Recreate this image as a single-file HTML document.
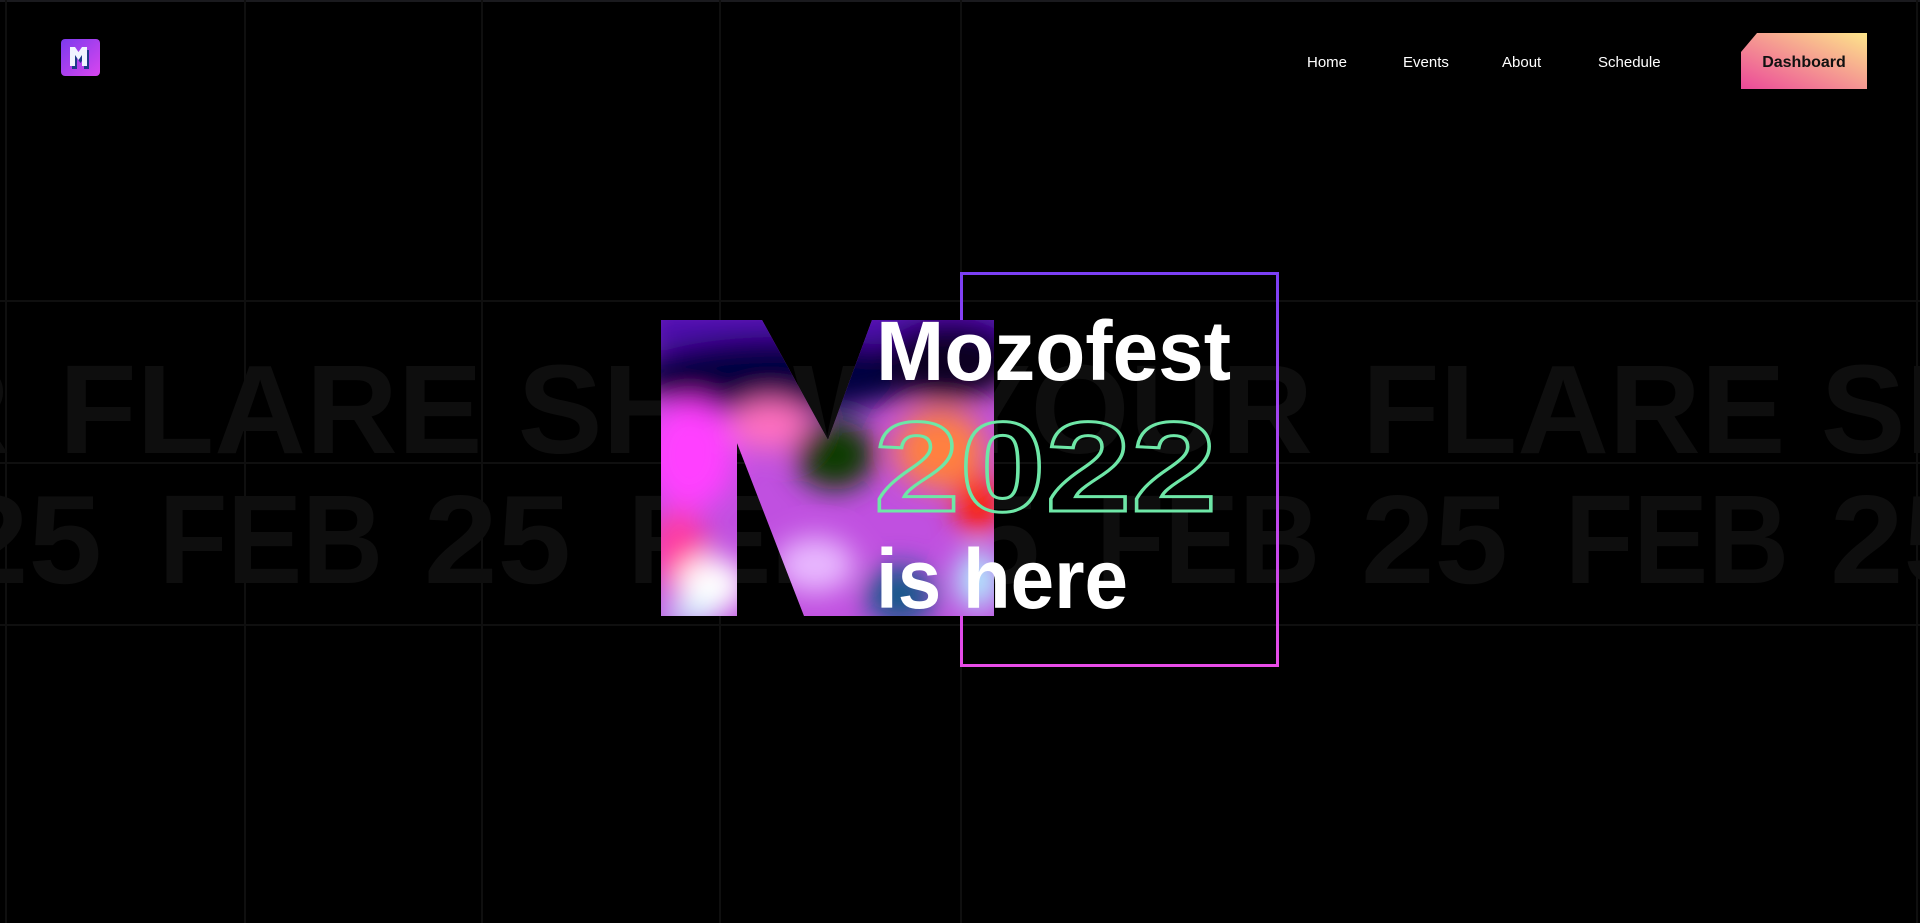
<!DOCTYPE html>
<html><head><meta charset="utf-8"><style>
html,body{margin:0;padding:0;background:#000;width:1920px;height:923px;overflow:hidden}
svg{display:block}
</style></head><body>
<svg width="1920" height="923" viewBox="0 0 1920 923" xmlns="http://www.w3.org/2000/svg">
<defs>
<linearGradient id="lg" x1="0" y1="0" x2="1" y2="1"><stop offset="0" stop-color="#7c3aed"/><stop offset="1" stop-color="#d946ef"/></linearGradient>
<linearGradient id="bg" x1="0" y1="1" x2="1" y2="0"><stop offset="0" stop-color="#ec4899"/><stop offset="1" stop-color="#fde68a"/></linearGradient>
<linearGradient id="box" x1="0" y1="0" x2="0" y2="1"><stop offset="0" stop-color="#7b3ff5"/><stop offset="1" stop-color="#e84ce8"/></linearGradient>
<clipPath id="mc"><polygon points="661,320 762,320 828,440 872,320 994,320 994,616 804,616 737,443 737,616 661,616"/></clipPath>
<filter id="bl" x="-50%" y="-50%" width="200%" height="200%"><feGaussianBlur stdDeviation="14"/></filter>
</defs>
<rect width="1920" height="923" fill="#000"/>
<g fill="#0f0f0f">
<rect x="0" y="0" width="1920" height="2" fill="#1a1a1e"/>
<rect x="5" y="0" width="2" height="923"/><rect x="244" y="0" width="2" height="923"/><rect x="481" y="0" width="2" height="923"/><rect x="719" y="0" width="2" height="923"/><rect x="960" y="0" width="2" height="923"/><rect x="1916" y="0" width="2" height="923"/>
<rect x="0" y="300" width="1920" height="2"/><rect x="0" y="462" width="1920" height="2"/><rect x="0" y="624" width="1920" height="2"/>
</g>
<g font-family="Liberation Sans, sans-serif" font-weight="bold" font-size="126" fill="#0e0e0e">
<text x="-1244" y="453" textLength="1254" lengthAdjust="spacingAndGlyphs">FLARE SHOW YOUR</text>
<text x="59" y="453" textLength="1254" lengthAdjust="spacingAndGlyphs">FLARE SHOW YOUR</text>
<text x="1362" y="453" textLength="1254" lengthAdjust="spacingAndGlyphs">FLARE SHOW YOUR</text>
<text x="-310" y="583" textLength="224" lengthAdjust="spacingAndGlyphs">FEB</text>
<text x="159" y="583" textLength="224" lengthAdjust="spacingAndGlyphs">FEB</text>
<text x="628" y="583" textLength="224" lengthAdjust="spacingAndGlyphs">FEB</text>
<text x="1096" y="583" textLength="224" lengthAdjust="spacingAndGlyphs">FEB</text>
<text x="1565" y="583" textLength="224" lengthAdjust="spacingAndGlyphs">FEB</text>
<text x="-45" y="583" textLength="147" lengthAdjust="spacingAndGlyphs">25</text>
<text x="424" y="583" textLength="147" lengthAdjust="spacingAndGlyphs">25</text>
<text x="893" y="583" textLength="147" lengthAdjust="spacingAndGlyphs">25</text>
<text x="1361" y="583" textLength="147" lengthAdjust="spacingAndGlyphs">25</text>
<text x="1830" y="583" textLength="147" lengthAdjust="spacingAndGlyphs">25</text>
</g>
<rect x="961.5" y="273.5" width="316" height="392" fill="none" stroke="url(#box)" stroke-width="3"/>
<g clip-path="url(#mc)">
<rect x="640" y="300" width="380" height="340" fill="#c050e0"/>
<g filter="url(#bl)">
<rect x="640" y="300" width="380" height="50" fill="#5010b0"/>
<ellipse cx="780" cy="375" rx="150" ry="38" fill="#000040"/>
<ellipse cx="950" cy="360" rx="70" ry="40" fill="#100020"/>
<ellipse cx="690" cy="455" rx="45" ry="55" fill="#ff40ff"/>
<ellipse cx="770" cy="425" rx="40" ry="25" fill="#ff70c0"/>
<ellipse cx="835" cy="455" rx="40" ry="35" fill="#0c3a00"/>
<ellipse cx="940" cy="450" rx="45" ry="40" fill="#ff8040"/>
<ellipse cx="978" cy="505" rx="22" ry="30" fill="#ff2000"/>
<ellipse cx="678" cy="550" rx="30" ry="40" fill="#ff3aa0"/>
<ellipse cx="712" cy="585" rx="35" ry="28" fill="#ffffff"/>
<ellipse cx="815" cy="565" rx="40" ry="28" fill="#e8b8ff"/>
<ellipse cx="900" cy="595" rx="35" ry="30" fill="#15588a"/>
<ellipse cx="978" cy="580" rx="22" ry="30" fill="#b0f0ff"/>
<ellipse cx="690" cy="615" rx="30" ry="10" fill="#c0ffff"/>
</g>
</g>
<g font-family="Liberation Sans, sans-serif" fill="#fff">
<text x="876" y="380" font-size="84" font-weight="bold" textLength="355" lengthAdjust="spacingAndGlyphs">Mozofest</text>
<text x="874" y="511" font-size="128" font-weight="bold" fill="none" stroke="#6ee7a7" stroke-width="3" textLength="343" lengthAdjust="spacingAndGlyphs">2022</text>
<text x="876" y="608" font-size="84" font-weight="bold" textLength="252" lengthAdjust="spacingAndGlyphs">is here</text>
</g>
<rect x="61" y="39" width="39" height="37" rx="4" fill="url(#lg)"/>
<path d="M70 47h5l3.5 5l3.5-5h5v19h-5v-11l-3.5 5l-3.5-5v11h-5z" fill="#1e3a8a" transform="translate(2,3)"/>
<path d="M70 47h5l3.5 5l3.5-5h5v19h-5v-11l-3.5 5l-3.5-5v11h-5z" fill="#f0f4ff"/>
<g font-family="Liberation Sans, sans-serif" font-size="15" fill="#fff">
<text x="1307" y="67">Home</text>
<text x="1403" y="67">Events</text>
<text x="1502" y="67">About</text>
<text x="1598" y="67">Schedule</text>
</g>
<polygon points="1757,33 1867,33 1867,89 1741,89 1741,52" fill="url(#bg)"/>
<text x="1804" y="67" text-anchor="middle" font-family="Liberation Sans, sans-serif" font-weight="bold" font-size="16" fill="#111">Dashboard</text>
</svg>
</body></html>
